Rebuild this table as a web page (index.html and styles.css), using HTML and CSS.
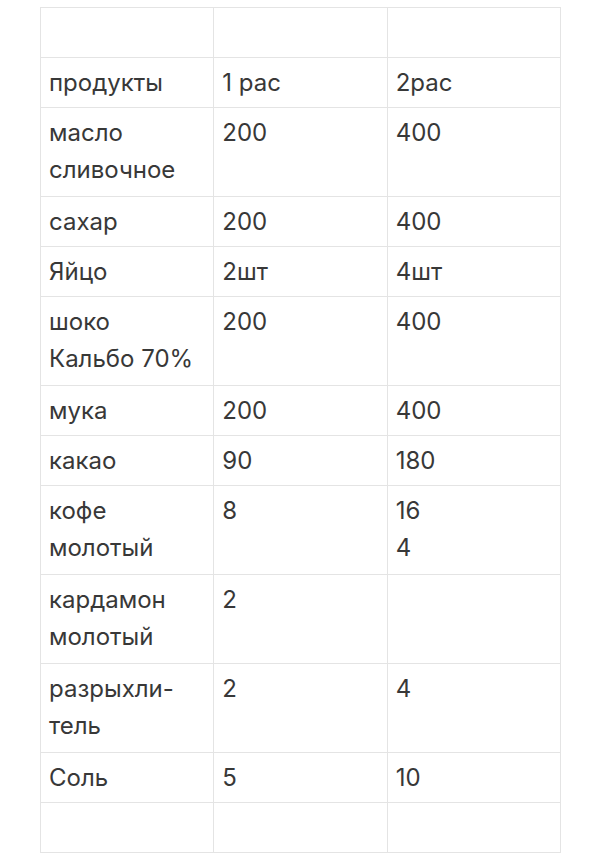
FILE: index.html
```html
<!DOCTYPE html>
<html lang="ru">
<head>
<meta charset="utf-8">
<link rel="stylesheet" href="styles.css">
</head>
<body>
<table class="recipe">
  <tr><td></td><td></td><td></td></tr>
  <tr><td>продукты</td><td>1 рас</td><td>2рас</td></tr>
  <tr class="two"><td>масло<br>сливочное</td><td>200</td><td>400</td></tr>
  <tr><td>сахар</td><td>200</td><td>400</td></tr>
  <tr><td>Яйцо</td><td>2шт</td><td>4шт</td></tr>
  <tr class="two"><td>шоко<br>Кальбо 70%</td><td>200</td><td>400</td></tr>
  <tr><td>мука</td><td>200</td><td>400</td></tr>
  <tr><td>какао</td><td>90</td><td>180</td></tr>
  <tr class="two"><td>кофе<br>молотый</td><td>8</td><td>16<br>4</td></tr>
  <tr class="two"><td>кардамон<br>молотый</td><td>2</td><td></td></tr>
  <tr class="two"><td>разрыхли-<br>тель</td><td>2</td><td>4</td></tr>
  <tr><td>Соль</td><td>5</td><td>10</td></tr>
  <tr><td></td><td></td><td></td></tr>
</table>
</body>
</html>
```
FILE: styles.css
```css
html, body {
  margin: 0;
  padding: 0;
  background: #ffffff;
}
body {
  padding: 7px 40px 0 40px;
  font-family: Inter, "Noto Sans", sans-serif;
  color: #383838;
}
.recipe {
  width: 521px;
  border-collapse: collapse;
  table-layout: fixed;
  font-size: 24px;
  line-height: 37px;
}
.recipe td {
  border: 1px solid #e4e4e4;
  padding: 6px 8px;
  height: 37px;
  vertical-align: top;
  width: 33.33%;
}
.recipe .two td {
  height: 76px;
}
```
